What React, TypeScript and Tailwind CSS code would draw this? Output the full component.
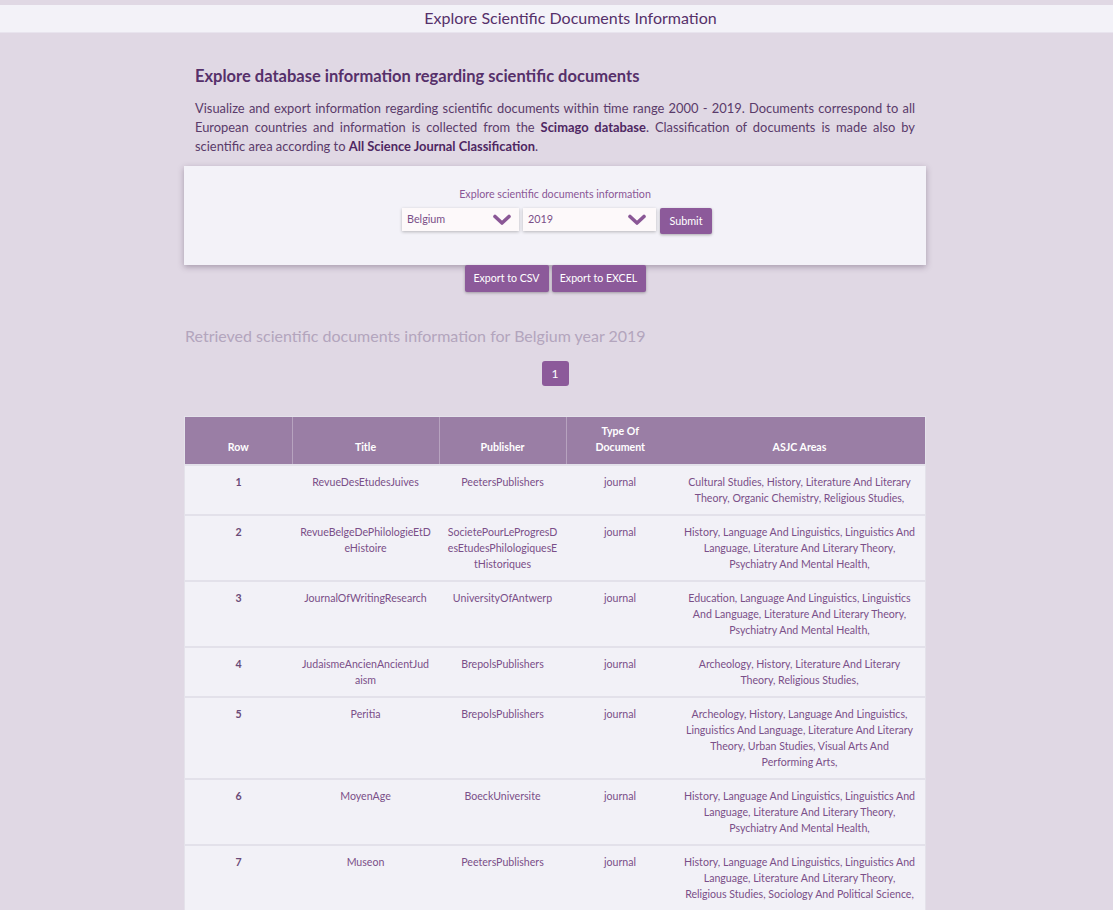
import React from "react";

const rows = [
  { n: 1, title: "RevueDesEtudesJuives", pub: "PeetersPublishers", areas: "Cultural Studies, History, Literature And Literary Theory, Organic Chemistry, Religious Studies," },
  { n: 2, title: "RevueBelgeDePhilologieEtDeHistoire", pub: "SocietePourLeProgresDesEtudesPhilologiquesEtHistoriques", areas: "History, Language And Linguistics, Linguistics And Language, Literature And Literary Theory, Psychiatry And Mental Health," },
  { n: 3, title: "JournalOfWritingResearch", pub: "UniversityOfAntwerp", areas: "Education, Language And Linguistics, Linguistics And Language, Literature And Literary Theory, Psychiatry And Mental Health," },
  { n: 4, title: "JudaismeAncienAncientJudaism", pub: "BrepolsPublishers", areas: "Archeology, History, Literature And Literary Theory, Religious Studies," },
  { n: 5, title: "Peritia", pub: "BrepolsPublishers", areas: "Archeology, History, Language And Linguistics, Linguistics And Language, Literature And Literary Theory, Urban Studies, Visual Arts And Performing Arts," },
  { n: 6, title: "MoyenAge", pub: "BoeckUniversite", areas: "History, Language And Linguistics, Linguistics And Language, Literature And Literary Theory, Psychiatry And Mental Health," },
  { n: 7, title: "Museon", pub: "PeetersPublishers", areas: "History, Language And Linguistics, Linguistics And Language, Literature And Literary Theory, Religious Studies, Sociology And Political Science," },
];

const Chevron = () => (
  <svg width="18" height="12" viewBox="0 0 18 12" className="shrink-0">
    <path d="M2 2.5 L9 9 L16 2.5" fill="none" stroke="#8a5796" strokeWidth="3.6" strokeLinecap="round" strokeLinejoin="round" />
  </svg>
);

export default function App() {
  const font = { fontFamily: "Lato, 'Noto Sans', sans-serif" };
  return (
    <div className="min-h-[910px] bg-[#e0d8e4] pt-[5px]" style={font}>
      <div className="h-[28px] bg-[#f3f2f8] border-b border-[#e8e4ee] flex items-center justify-center pl-[28px] pb-[2px] text-[16px] text-[#56306a]">
        Explore Scientific Documents Information
      </div>

      <div className="w-[742px] ml-[184px]">
        <div className="px-[11px] pt-[32px]">
          <h2 className="text-[16.5px] font-bold text-[#56306a] leading-[22px]">
            Explore database information regarding scientific documents
          </h2>
          <p className="mt-[12px] text-[12.9px] leading-[19px] text-[#5a3b6a] text-justify">
            Visualize and export information regarding scientific documents within time range 2000 - 2019. Documents correspond to all European countries and information is collected from the <b className="text-[#4e2762]">Scimago database</b>. Classification of documents is made also by scientific area according to <b className="text-[#4e2762]">All Science Journal Classification</b>.
          </p>
        </div>

        <div className="mt-[10px] h-[99px] bg-[#f3f2f8] shadow-[0_2px_6px_rgba(60,40,70,0.35)] flex flex-col items-center pt-[21px]">
          <div className="text-[10.7px] text-[#8a5796] leading-[14px]">Explore scientific documents information</div>
          <div className="mt-[7px] ml-[4px] flex items-start gap-[4px]">
            <div className="w-[117px] h-[23px] bg-[#fdf9fa] shadow-[0_1px_3px_rgba(0,0,0,0.25)] flex items-center justify-between pl-[5px] pr-[8px] text-[10.8px] text-[#7a4f88]">
              <span>Belgium</span>
              <Chevron />
            </div>
            <div className="w-[133px] h-[23px] bg-[#fdf9fa] shadow-[0_1px_3px_rgba(0,0,0,0.25)] flex items-center justify-between pl-[5px] pr-[10px] text-[10.8px] text-[#7a4f88]">
              <span>2019</span>
              <Chevron />
            </div>
            <div className="w-[52px] h-[26px] bg-[#8c5a9a] rounded-[2px] shadow-[0_1px_3px_rgba(0,0,0,0.3)] flex items-center justify-center text-[10.8px] text-white">
              Submit
            </div>
          </div>
        </div>

        <div className="flex justify-center gap-[3px]">
          <div className="w-[84px] h-[27px] bg-[#8c5a9a] rounded-[2px] shadow-[0_1px_3px_rgba(0,0,0,0.3)] flex items-center justify-center text-[10.6px] text-white">Export to CSV</div>
          <div className="w-[94px] h-[27px] bg-[#8c5a9a] rounded-[2px] shadow-[0_1px_3px_rgba(0,0,0,0.3)] flex items-center justify-center text-[10.6px] text-white">Export to EXCEL</div>
        </div>

        <div className="mt-[33px] pl-[1px] text-[16px] leading-[22px] text-[#b3a5bd]">
          Retrieved scientific documents information for Belgium year 2019
        </div>

        <div className="mt-[14px] flex justify-center">
          <div className="w-[27px] h-[25px] rounded-[3px] bg-[#8c5a9a] text-white text-[12px] flex items-center justify-center">1</div>
        </div>

        <div className="mt-[30px] bg-[#f2f1f7] border border-[#e4e2ea]">
          <table className="w-full table-fixed border-collapse text-[10.6px] leading-[16px]">
            <thead>
              <tr className="bg-[#9a7ea5] text-white font-bold">
                <th className="w-[107px] h-[48px] align-bottom pb-[9px] border-r border-[#b7a3bf]">Row</th>
                <th className="w-[147px] align-bottom pb-[9px] border-r border-[#b7a3bf]">Title</th>
                <th className="w-[127px] align-bottom pb-[9px] border-r border-[#b7a3bf]">Publisher</th>
                <th className="w-[108px] align-bottom pb-[9px] px-[26px]">Type Of Document</th>
                <th className="align-bottom pb-[9px]">ASJC Areas</th>
              </tr>
            </thead>
            <tbody>
              {rows.map((r) => (
                <tr key={r.n} className="border-t-2 border-[#e3e1ea] text-[#7a4f88] align-top">
                  <td className="text-center pt-[8px] pb-[8px] font-bold text-[#6a4a78]">{r.n}</td>
                  <td className="text-center pt-[8px] pb-[8px] px-[8px] break-all">{r.title}</td>
                  <td className="text-center pt-[8px] pb-[8px] px-[8px] break-all">{r.pub}</td>
                  <td className="text-center pt-[8px] pb-[8px]">journal</td>
                  <td className="text-center pt-[8px] pb-[8px] px-[9px]">{r.areas}</td>
                </tr>
              ))}
            </tbody>
          </table>
        </div>
      </div>
    </div>
  );
}
